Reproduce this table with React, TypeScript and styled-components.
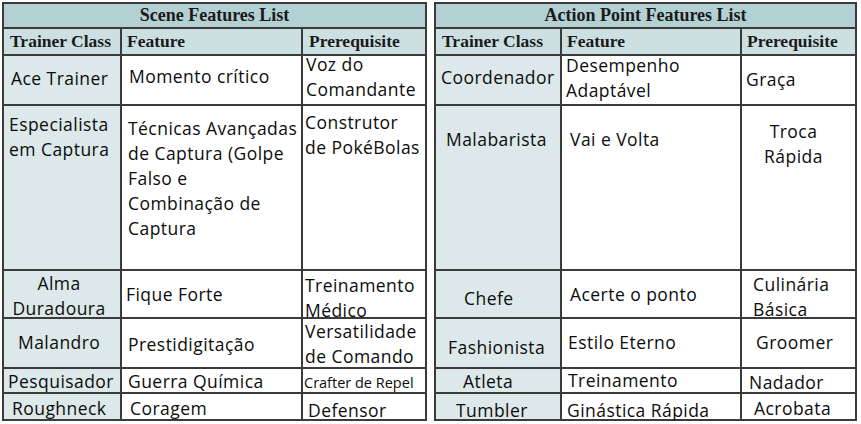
import React from 'react'
import styled, { createGlobalStyle } from 'styled-components'

type Cell = {
  t: string
  x: number
  y: number
  center?: boolean
  small?: boolean
}

type TableData = {
  title: string
  cols: number[]
  heads: number[]
  rows: Cell[][]
}

const ROWS = [48, 163, 46, 48, 23, 25]

const scene: TableData = {
  title: 'Scene Features List',
  cols: [116, 179, 122],
  heads: [6, 5, 6],
  rows: [
    [
      { t: 'Ace Trainer', x: 7, y: 22 },
      { t: 'Momento crítico', x: 7, y: 20 },
      { t: 'Voz do\nComandante', x: 3, y: 8 },
    ],
    [
      { t: 'Especialista\nem Captura', x: 5, y: 18 },
      {
        t: 'Técnicas Avançadas\nde Captura (Golpe\nFalso e\nCombinação de\nCaptura',
        x: 6,
        y: 22,
      },
      { t: 'Construtor\nde PokéBolas', x: 2, y: 16 },
    ],
    [
      { t: 'Alma\nDuradoura', x: -6, y: 12, center: true },
      { t: 'Fique Forte', x: 4, y: 23 },
      { t: 'Treinamento\nMédico', x: 2, y: 14 },
    ],
    [
      { t: 'Malandro', x: 14, y: 23 },
      { t: 'Prestidigitação', x: 6, y: 25 },
      { t: 'Versatilidade\nde Comando', x: 2, y: 12 },
    ],
    [
      { t: 'Pesquisador', x: 4, y: 12 },
      { t: 'Guerra Química', x: 6, y: 12 },
      { t: 'Crafter de Repel', x: 1, y: 13, small: true },
    ],
    [
      { t: 'Roughneck', x: 8, y: 14 },
      { t: 'Coragem', x: 8, y: 14 },
      { t: 'Defensor', x: 5, y: 16 },
    ],
  ],
}

const action: TableData = {
  title: 'Action Point Features List',
  cols: [124, 178, 113],
  heads: [6, 5, 5],
  rows: [
    [
      { t: 'Coordenador', x: 5, y: 21 },
      { t: 'Desempenho\nAdaptável', x: 4, y: 9 },
      { t: 'Graça', x: 4, y: 23 },
    ],
    [
      { t: 'Malabarista', x: 10, y: 33 },
      { t: 'Vai e Volta', x: 8, y: 33 },
      { t: 'Troca\nRápida', x: -10, y: 25, center: true },
    ],
    [
      { t: 'Chefe', x: 28, y: 27 },
      { t: 'Acerte o ponto', x: 8, y: 23 },
      { t: 'Culinária\nBásica', x: 11, y: 13 },
    ],
    [
      { t: 'Fashionista', x: 12, y: 28 },
      { t: 'Estilo Eterno', x: 6, y: 23 },
      { t: 'Groomer', x: 14, y: 23 },
    ],
    [
      { t: 'Atleta', x: 27, y: 12 },
      { t: 'Treinamento', x: 6, y: 11 },
      { t: 'Nadador', x: 7, y: 13 },
    ],
    [
      { t: 'Tumbler', x: 20, y: 16 },
      { t: 'Ginástica Rápida', x: 5, y: 16 },
      { t: 'Acrobata', x: 12, y: 14 },
    ],
  ],
}

const GlobalStyle = createGlobalStyle`
  html, body {
    margin: 0;
    padding: 0;
    background: #ffffff;
  }
  #root {
    padding: 2px;
  }
`

const Page = styled.div`
  display: flex;
  gap: 7px;
  align-items: flex-start;
`

const Grid = styled.div<{ $cols: number[] }>`
  display: grid;
  grid-template-columns: ${(p) => p.$cols.map((c) => `${c}px`).join(' ')};
  grid-template-rows: 23px 25px ${ROWS.map((r) => `${r}px`).join(' ')};
  gap: 2px;
  padding: 2px;
  background: #3b3b3b;
`

const Title = styled.div`
  grid-column: 1 / -1;
  background: #b3d1d3;
  display: flex;
  align-items: center;
  justify-content: center;
  font-family: 'Liberation Serif', serif;
  font-weight: 700;
  font-size: 18px;
  color: #1a1a1a;
`

const Head = styled.div<{ $x: number }>`
  background: #cce0e2;
  display: flex;
  align-items: center;
  padding-left: ${(p) => p.$x}px;
  font-family: 'Liberation Serif', serif;
  font-weight: 700;
  font-size: 17.5px;
  color: #1a1a1a;
  white-space: nowrap;
  overflow: hidden;
`

const Body = styled.div<{ $first: boolean; $center?: boolean; $x: number }>`
  background: ${(p) => (p.$first ? '#dce8e9' : '#ffffff')};
  min-width: 0;
  display: flex;
  flex-direction: column;
  align-items: ${(p) => (p.$center ? 'center' : 'flex-start')};
  padding-left: ${(p) => (p.$center ? 0 : p.$x)}px;
  padding-right: ${(p) => (p.$center ? -p.$x : 0)}px;
`

const Text = styled.div<{ $y: number; $small?: boolean; $center?: boolean }>`
  margin-top: ${(p) => p.$y - 12.5}px;
  font-family: 'Open Sans', 'Noto Sans', sans-serif;
  font-size: ${(p) => (p.$small ? 14.5 : 17.5)}px;
  letter-spacing: ${(p) => (p.$small ? 0 : 0.45)}px;
  line-height: 25px;
  color: #0c0c0c;
  white-space: pre;
  text-align: ${(p) => (p.$center ? 'center' : 'left')};
`

const FeatureTable = ({ data }: { data: TableData }) => (
  <Grid $cols={data.cols}>
    <Title>{data.title}</Title>
    {['Trainer Class', 'Feature', 'Prerequisite'].map((h, i) => (
      <Head key={h} $x={data.heads[i]}>
        {h}
      </Head>
    ))}
    {data.rows.map((row, r) =>
      row.map((cell, c) => (
        <Body key={`${r}-${c}`} $first={c === 0} $center={cell.center} $x={cell.x}>
          <Text $y={cell.y} $small={cell.small} $center={cell.center}>
            {cell.t}
          </Text>
        </Body>
      ))
    )}
  </Grid>
)

export default function App() {
  return (
    <>
      <GlobalStyle />
      <Page>
        <FeatureTable data={scene} />
        <FeatureTable data={action} />
      </Page>
    </>
  )
}
